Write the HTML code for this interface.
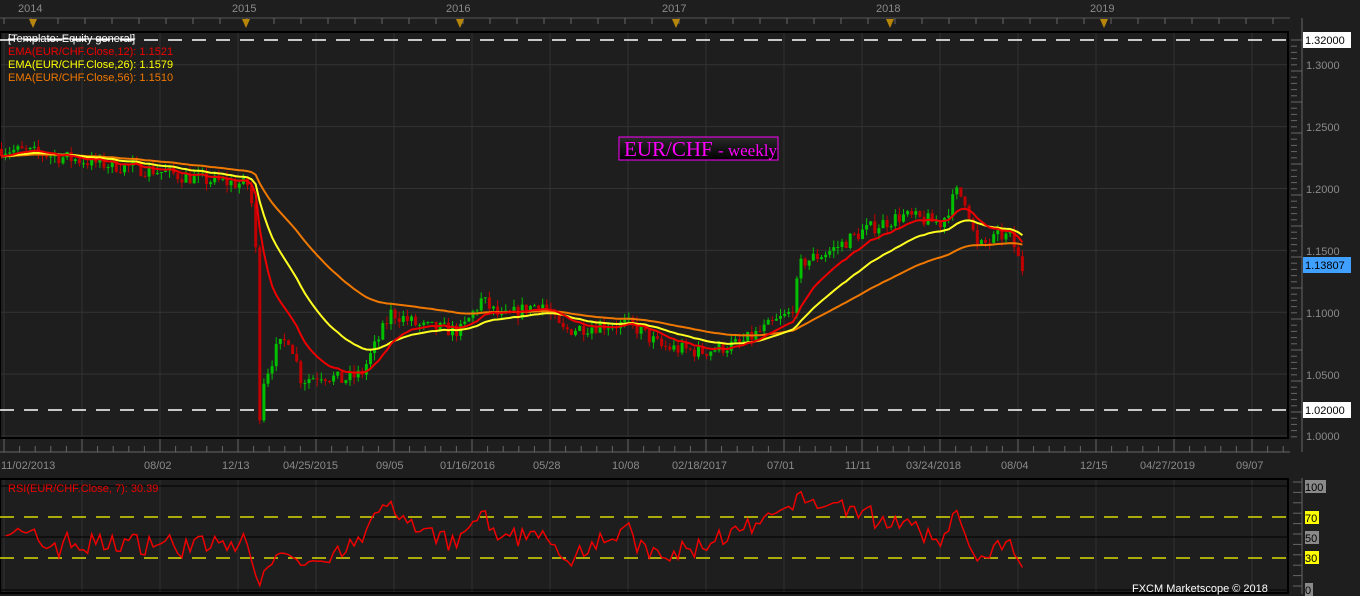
<!DOCTYPE html>
<html><head><meta charset="utf-8"><style>
body{margin:0;background:#1e1e1e;width:1360px;height:596px;overflow:hidden;font-family:"Liberation Sans",sans-serif}
svg{display:block}
text{font-family:"Liberation Sans",sans-serif}
</style></head><body>
<svg id="s" width="1360" height="596" xmlns="http://www.w3.org/2000/svg">
<defs><linearGradient id="tg" x1="0" y1="0" x2="0" y2="1"><stop offset="0" stop-color="#2a2a2a"/><stop offset="1" stop-color="#000"/></linearGradient></defs>
<rect width="1360" height="596" fill="#1e1e1e"/>
<g id="grid"></g>
<rect x="0" y="32" width="1288" height="406" fill="none" stroke="#000" stroke-width="2"/>
<rect x="0" y="479" width="1288" height="114" fill="none" stroke="#000" stroke-width="2"/>
<line x1="0" y1="486" x2="1288" y2="486" stroke="#000"/>
<line x1="0" y1="537" x2="1288" y2="537" stroke="#000"/>
<line x1="0" y1="590" x2="1288" y2="590" stroke="#000"/>
<line x1="0" y1="40" x2="1286" y2="40" stroke="#fff" stroke-width="1.5" stroke-dasharray="14,10"/>
<line x1="0" y1="410" x2="1286" y2="410" stroke="#fff" stroke-width="1.5" stroke-dasharray="14,10"/>
<line x1="0" y1="517" x2="1286" y2="517" stroke="#ff0" stroke-width="1.3" stroke-dasharray="14,10"/>
<line x1="0" y1="558" x2="1286" y2="558" stroke="#ff0" stroke-width="1.3" stroke-dasharray="14,10"/>
<g id="data"></g>
<g font-size="11" fill="#8a8a8a">
<text x="18" y="12">2014</text><text x="232" y="12">2015</text><text x="446" y="12">2016</text><text x="662" y="12">2017</text><text x="876" y="12">2018</text><text x="1090" y="12">2019</text>
<text x="1" y="469">11/02/2013</text><text x="144" y="469">08/02</text><text x="222" y="469">12/13</text><text x="283" y="469">04/25/2015</text><text x="376" y="469">09/05</text><text x="440" y="469">01/16/2016</text><text x="533" y="469">05/28</text><text x="612" y="469">10/08</text><text x="672" y="469">02/18/2017</text><text x="767" y="469">07/01</text><text x="845" y="469">11/11</text><text x="906" y="469">03/24/2018</text><text x="1001" y="469">08/04</text><text x="1080" y="469">12/15</text><text x="1140" y="469">04/27/2019</text><text x="1236" y="469">09/07</text>
<text x="1306" y="69">1.3000</text><text x="1306" y="131">1.2500</text><text x="1306" y="193">1.2000</text><text x="1306" y="255">1.1500</text><text x="1306" y="317">1.1000</text><text x="1306" y="379">1.0500</text><text x="1306" y="440">1.0000</text>
</g>
<rect x="1303" y="32" width="48" height="16" fill="#fff"/><text x="1305" y="44" font-size="11" fill="#000">1.32000</text>
<rect x="1303" y="402" width="48" height="16" fill="#fff"/><text x="1305" y="414" font-size="11" fill="#000">1.02000</text>
<rect x="1303" y="257" width="48" height="16" fill="#3fa0ff"/><text x="1305" y="269" font-size="11" fill="#000">1.13807</text>
<rect x="1305" y="480" width="21" height="13" fill="#8a8a8a"/><text x="1305" y="491" font-size="11" fill="#000">100</text>
<rect x="1305" y="511" width="14" height="13" fill="#ff0"/><text x="1305" y="522" font-size="11" fill="#000">70</text>
<rect x="1305" y="531" width="14" height="13" fill="#8a8a8a"/><text x="1305" y="542" font-size="11" fill="#000">50</text>
<rect x="1305" y="551" width="14" height="13" fill="#ff0"/><text x="1305" y="562" font-size="11" fill="#000">30</text>
<rect x="1305" y="583" width="8" height="13" fill="#8a8a8a"/><text x="1305" y="594" font-size="11" fill="#000">0</text>
<text x="1132" y="592" font-size="11" fill="#fff">FXCM Marketscope © 2018</text>
<text x="8" y="42" font-size="11" fill="#fff" text-decoration="line-through">[Template: Equity general]</text>
<text x="8" y="55" font-size="11" fill="#e00">EMA(EUR/CHF.Close,12): 1.1521</text>
<text x="8" y="68" font-size="11" fill="#ff0">EMA(EUR/CHF.Close,26): 1.1579</text>
<text x="8" y="81" font-size="11" fill="#f07800">EMA(EUR/CHF.Close,56): 1.1510</text>
<text x="8" y="492" font-size="11" fill="#e00">RSI(EUR/CHF.Close, 7): 30.39</text>
<rect x="619" y="137" width="159" height="23" fill="url(#tg)" stroke="#f0f" stroke-width="1"/>
<text x="624" y="156" font-size="21" fill="#f0f" style="font-family:'Liberation Serif',serif">EUR/CHF <tspan font-size="17">- weekly</tspan></text>
</svg>
<script>
var NS="http://www.w3.org/2000/svg",g=document.getElementById('grid'),d=document.getElementById('data');
function el(p,t,a){var e=document.createElementNS(NS,t);for(var k in a)e.setAttribute(k,a[k]);p.appendChild(e);return e}
for(var x=4;x<1288;x+=78){el(g,'line',{x1:x,y1:33,x2:x,y2:437,stroke:'#333'});el(g,'line',{x1:x,y1:480,x2:x,y2:592,stroke:'#333'});el(g,'line',{x1:x,y1:438,x2:x,y2:452,stroke:'#666'});}
for(var x=4;x<1288;x+=15.6){el(g,'line',{x1:x,y1:446,x2:x,y2:452,stroke:'#666'});}
el(g,'line',{x1:0,y1:452,x2:1290,y2:452,stroke:'#666'});el(g,'line',{x1:0,y1:18,x2:1290,y2:18,stroke:'#555'});
for(var x=4;x<1288;x+=27){el(g,'line',{x1:x,y1:18,x2:x,y2:24,stroke:'#666'});}
[33,246,460,676,890,1104].forEach(function(x){el(g,'path',{d:'M'+(x-4)+' 19L'+(x+4)+' 19L'+x+' 28Z',fill:'#b8860b'})});
for(var p=1.0;p<=1.3001;p+=0.05){var y=40+(1.32-p)*1237.5;el(g,'line',{x1:1,y1:y,x2:1287,y2:y,stroke:'#333'});}
for(var y=40;y<440;y+=6.2){el(g,'line',{x1:1291,y1:y,x2:(Math.round((y-40)/6.2)%5==0?1302:1297),y2:y,stroke:'#666'});}
el(g,'line',{x1:1302,y1:18,x2:1302,y2:452,stroke:'#666'});el(g,'line',{x1:1302,y1:478,x2:1302,y2:594,stroke:'#666'});
for(var y=482;y<594;y+=10.4){el(g,'line',{x1:1293,y1:y,x2:1302,y2:y,stroke:'#666'});}
var K=[[0,1.232],[40,1.228],[100,1.220],[150,1.215],[200,1.207],[248,1.203],[254,1.16],[258,1.01],[262,1.045],[275,1.07],[288,1.08],[300,1.045],[320,1.05],[340,1.045],[360,1.05],[375,1.075],[390,1.10],[420,1.088],[460,1.085],[480,1.11],[500,1.095],[540,1.108],[560,1.085],[600,1.09],[630,1.09],[660,1.072],[700,1.068],[740,1.075],[760,1.085],[790,1.10],[800,1.14],[830,1.15],[860,1.165],[900,1.178],[940,1.172],[955,1.197],[965,1.19],[975,1.152],[1000,1.162],[1010,1.16],[1020,1.135],[1024,1.138]];
function P(x){for(var i=1;i<K.length;i++)if(x<=K[i][0]){var a=K[i-1],b=K[i];return a[1]+(b[1]-a[1])*(x-a[0])/(b[0]-a[0]);}return 1.138}
var seed=7;function r(){seed=(seed*16807)%2147483647;return seed/2147483647}
function Y(p){return 40+(1.32-p)*1237.5}
var closes=[],xs=[],prev=P(0);
for(var x=0;x<=1024;x+=4.1){var c=P(x)+(r()-0.5)*0.012;if(x>248&&x<262)c=P(x);var o=prev;var hi=Math.max(o,c)+r()*0.006,lo=Math.min(o,c)-r()*0.006;
el(d,'line',{x1:x+1.5,y1:Y(hi),x2:x+1.5,y2:Y(lo),stroke:c>=o?'#00c000':'#c00000'});
el(d,'rect',{x:x,y:Y(Math.max(o,c)),width:3,height:Math.max(1,Math.abs(Y(o)-Y(c))),fill:c>=o?'#00c000':'#c00000'});
closes.push(c);xs.push(x+1.5);prev=c;}
function ema(n,col){var k=2/(n+1),e=closes[0],pts=[];for(var i=0;i<closes.length;i++){e=closes[i]*k+e*(1-k);pts.push(xs[i]+','+Y(e).toFixed(1));}el(d,'polyline',{points:pts.join(' '),fill:'none',stroke:col,'stroke-width':2});}
ema(56,'#f07800');ema(26,'#ffff20');ema(12,'#ee0000');
var ag=0.004,al=0.004,pts=[];for(var i=1;i<closes.length;i++){var ch=closes[i]-closes[i-1];var gn=Math.max(ch,0),ls=Math.max(-ch,0);ag=(ag*6+gn)/7;al=(al*6+ls)/7;var rsi=al==0?100:100-100/(1+ag/al);pts.push(xs[i]+','+(590-rsi*1.04).toFixed(1));}
el(d,'polyline',{points:pts.join(' '),fill:'none',stroke:'#ee0000','stroke-width':1.5});
</script>
</body></html>
